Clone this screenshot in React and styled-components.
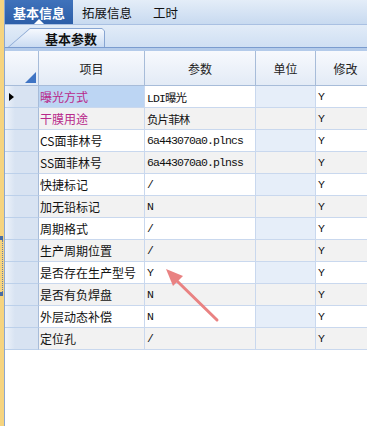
import React from 'react';
import styled, { createGlobalStyle } from 'styled-components';

const GlobalStyle = createGlobalStyle`
  html, body {
    margin: 0;
    padding: 0;
    background: #ffffff;
    overflow: hidden;
  }
  body {
    font-family: "Noto Sans CJK SC", "Liberation Sans", sans-serif;
  }
`;

const ROWS = [
  { name: '曝光方式', value: 'LDI曝光', edit: 'Y', pink: true, current: true },
  { name: '干膜用途', value: '负片菲林', edit: 'Y', pink: true },
  { name: 'CS面菲林号', value: '6a443070a0.plncs', edit: 'Y' },
  { name: 'SS面菲林号', value: '6a443070a0.plnss', edit: 'Y' },
  { name: '快捷标记', value: '/', edit: 'Y' },
  { name: '加无铅标记', value: 'N', edit: 'Y' },
  { name: '周期格式', value: '/', edit: 'Y' },
  { name: '生产周期位置', value: '/', edit: 'Y' },
  { name: '是否存在生产型号', value: 'Y', edit: 'Y' },
  { name: '是否有负焊盘', value: 'N', edit: 'Y' },
  { name: '外层动态补偿', value: 'N', edit: 'Y' },
  { name: '定位孔', value: '/', edit: 'Y' },
];

const Page = styled.div`
  position: relative;
  display: flex;
  width: 367px;
  height: 426px;
  overflow: hidden;
`;

const SideStrip = styled.div`
  flex: 0 0 4px;
  display: flex;
  flex-direction: column;
  background: #f6d47f;
  border-right: 1px solid #8ba6cf;
`;

const StripSpacer = styled.div`
  flex: 0 0 236px;
`;

const Grip = styled.div`
  flex: 0 0 4px;
  margin-right: 1px;
  background: #4a6da3;
`;

const GripDots = styled.div`
  flex: 0 0 52px;
  margin-left: 2px;
  border-left: 1px dotted #6a80a8;
`;

const Main = styled.div`
  flex: 1;
  display: flex;
  flex-direction: column;
  min-width: 0;
`;

const TopTabs = styled.div`
  display: flex;
  height: 25px;
  background: linear-gradient(#e4edf8, #c8daf0);
  border-bottom: 1px solid #a9c0e2;
  box-sizing: border-box;
`;

const TopTab = styled.div`
  position: relative;
  display: flex;
  align-items: center;
  padding: ${(p) => (p.active ? '0 8px' : '0 12px 0 9px')};
  font-size: ${(p) => (p.active ? '13px' : '12.5px')};
  font-weight: ${(p) => (p.active ? 700 : 400)};
  color: ${(p) => (p.active ? '#ffffff' : '#111111')};
  background: ${(p) => (p.active ? 'linear-gradient(#3f72bb, #2c5ea8)' : 'transparent')};
  &::after {
    content: '';
    display: ${(p) => (p.active ? 'block' : 'none')};
    position: absolute;
    left: 50%;
    bottom: 0;
    margin-left: -5px;
    border-left: 5px solid transparent;
    border-right: 5px solid transparent;
    border-bottom: 5px solid #ffffff;
  }
`;

const SubStrip = styled.div`
  display: flex;
  align-items: flex-end;
  height: 22px;
  padding-left: 3px;
  background: linear-gradient(#e2ecf8, #cfdff3);
`;

const SubTabBorder = styled.div`
  width: 97px;
  height: 19px;
  background: #87a5d2;
  clip-path: polygon(0 100%, 22px 0, calc(100% - 3px) 0, 100% 3px, 100% 100%);
`;

const SubTabFace = styled.div`
  height: 18px;
  margin: 1px 1px 0 1px;
  display: flex;
  align-items: center;
  justify-content: flex-end;
  padding-right: 7px;
  font-size: 13px;
  font-weight: 700;
  color: #111111;
  background: linear-gradient(#f6f9fe, #c9dbf2);
  clip-path: polygon(0 100%, 21px 0, calc(100% - 2px) 0, 100% 2px, 100% 100%);
`;

const Band = styled.div`
  height: 3px;
  background: #b4cbea;
  border-top: 1px solid #7b9ccf;
`;

const Grid = styled.div`
  display: grid;
  grid-template-columns: 34px 106px 111px 60px 60px;
  grid-template-rows: 35px;
  grid-auto-rows: 22px;
`;

const HeadCell = styled.div`
  position: relative;
  display: flex;
  align-items: center;
  justify-content: center;
  box-sizing: border-box;
  font-size: 12px;
  color: #222222;
  background: linear-gradient(#f7f9fd, #e3ebf6);
  border-right: 1px solid #a7bcd9;
  border-bottom: 1px solid #a7bcd9;
`;

const CornerMark = styled.div`
  position: absolute;
  right: 2px;
  bottom: 2px;
  width: 0;
  height: 0;
  border-left: 11px solid transparent;
  border-bottom: 11px solid #3f74c4;
`;

const RowHead = styled.div`
  display: flex;
  align-items: center;
  padding-left: 4px;
  box-sizing: border-box;
  background: linear-gradient(90deg, #eef3fa, #d8e3f2 30%, #d8e3f2);
  border-right: 1px solid #a7bcd9;
  border-bottom: 1px solid #bcd0ea;
`;

const Pointer = styled.div`
  width: 0;
  height: 0;
  border-top: 4px solid transparent;
  border-bottom: 4px solid transparent;
  border-left: 5px solid #000000;
`;

const Cell = styled.div`
  display: flex;
  align-items: center;
  box-sizing: border-box;
  padding-left: ${(p) => (p.mono ? '2px' : '1px')};
  overflow: hidden;
  white-space: nowrap;
  font-family: ${(p) =>
    p.mono
      ? '"Liberation Mono", "Noto Sans CJK SC", monospace'
      : '"Noto Sans CJK SC", "Liberation Sans", sans-serif'};
  font-size: ${(p) => (p.mono ? '11.5px' : '12px')};
  letter-spacing: ${(p) => (p.mono ? '-0.9px' : '0')};
  color: ${(p) => (p.pink ? '#b8288a' : '#111111')};
  background: ${(p) => p.bg};
  border-right: 1px solid #c9d8ee;
  border-bottom: 1px solid #c9d8ee;
`;

const Arrow = styled.svg`
  position: absolute;
  left: 0;
  top: 0;
  pointer-events: none;
`;

const rowBg = (i) => (i % 2 === 0 ? '#ffffff' : '#f2f2f2');
const unitBg = (i) => (i % 2 === 0 ? '#e6eef9' : '#f2f2f2');

const App = () => (
  <>
    <GlobalStyle />
    <Page>
      <SideStrip>
        <StripSpacer />
        <Grip />
        <GripDots />
        <Grip />
      </SideStrip>
      <Main>
        <TopTabs>
          <TopTab active>基本信息</TopTab>
          <TopTab>拓展信息</TopTab>
          <TopTab>工时</TopTab>
        </TopTabs>
        <SubStrip>
          <SubTabBorder>
            <SubTabFace>基本参数</SubTabFace>
          </SubTabBorder>
        </SubStrip>
        <Band />
        <Grid>
          <HeadCell>
            <CornerMark />
          </HeadCell>
          <HeadCell>项目</HeadCell>
          <HeadCell>参数</HeadCell>
          <HeadCell>单位</HeadCell>
          <HeadCell>修改</HeadCell>
          {ROWS.map((r, i) => (
            <React.Fragment key={r.name}>
              <RowHead>{r.current && <Pointer />}</RowHead>
              <Cell pink={r.pink} bg={r.current ? '#bcd5f3' : rowBg(i)}>
                {r.name}
              </Cell>
              <Cell mono bg={rowBg(i)}>
                {r.value}
              </Cell>
              <Cell bg={unitBg(i)} />
              <Cell mono bg={rowBg(i)}>
                {r.edit}
              </Cell>
            </React.Fragment>
          ))}
        </Grid>
      </Main>
      <Arrow width="367" height="426" viewBox="0 0 367 426">
        <line x1="217" y1="320" x2="176" y2="280" stroke="#e98282" strokeWidth="3" strokeLinecap="round" />
        <polygon points="166,269 183,276 173,286" fill="#e98282" />
      </Arrow>
    </Page>
  </>
);

export default App;
